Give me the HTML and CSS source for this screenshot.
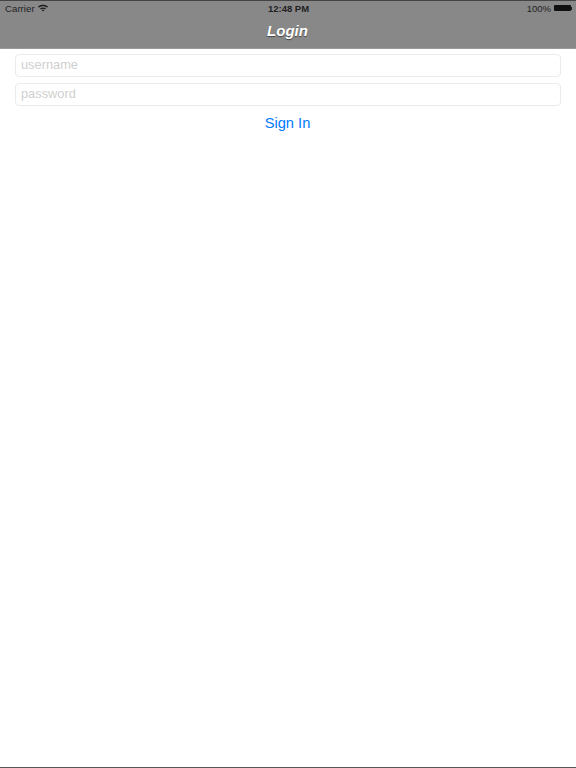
FILE: index.html
```html
<!DOCTYPE html>
<html lang="en">
<head>
    <meta charset="UTF-8">
    <meta name="viewport" content="width=device-width, initial-scale=1.0">
    <title>Login</title>
    <link rel="stylesheet" href="styles.css">
</head>
<body>
    <header class="top-bar">
        <div class="status-bar">
            <div class="status-left">
                <span>Carrier</span>
                <svg class="wifi-icon" width="10" height="8" viewBox="0 0 10 8">
                    <path d="M0 2.6C2.8 0 7.2 0 10 2.6L9 3.7C6.7 1.7 3.3 1.7 1 3.7Z" fill="#1c1c1c"/>
                    <path d="M2 4.5C3.7 3 6.3 3 8 4.5L7 5.5C5.8 4.5 4.2 4.5 3 5.5Z" fill="#1c1c1c"/>
                    <path d="M3.8 6.2C4.5 5.7 5.5 5.7 6.2 6.2L5 7.6Z" fill="#1c1c1c"/>
                </svg>
            </div>
            <div class="status-time">12:48 PM</div>
            <div class="status-right">
                <span>100%</span>
                <div class="battery"></div>
                <div class="battery-tip"></div>
            </div>
        </div>
        <div class="nav-title">Login</div>
    </header>

    <form class="login-form">
        <input type="text" class="text-input" placeholder="username">
        <input type="password" class="text-input" placeholder="password">
        <button type="button" class="sign-in">Sign In</button>
    </form>
</body>
</html>
```

FILE: styles.css
```css
* {
    margin: 0;
    padding: 0;
    box-sizing: border-box;
}

html, body {
    height: 100%;
}

body {
    font-family: "Liberation Sans", Arial, sans-serif;
    background: #fff;
    display: flex;
    flex-direction: column;
    border-bottom: 1px solid #555;
}

/* top bar */
.top-bar {
    height: 49px;
    background: #888;
    border-top: 1px solid #444;
    border-bottom: 1px solid #999;
}

.status-bar {
    height: 14px;
    padding: 0 4px 0 5px;
    display: grid;
    grid-template-columns: 1fr auto 1fr;
    align-items: center;
    font-size: 9.5px;
    color: #222;
}

.status-left {
    display: flex;
    align-items: center;
    gap: 3px;
    font-size: 9.7px;
}

.status-time {
    font-weight: bold;
    font-size: 9.5px;
}

.status-right {
    display: flex;
    justify-content: flex-end;
    align-items: center;
}

.status-right span {
    margin-right: 1px;
}

.battery {
    width: 17px;
    height: 6px;
    margin-left: 2px;
    background: #111;
    border-radius: 1px;
}

.battery-tip {
    width: 1px;
    height: 3px;
    background: #222;
}

.nav-title {
    height: 32px;
    padding-right: 1px;
    line-height: 32px;
    text-align: center;
    font-size: 15px;
    font-weight: bold;
    font-style: italic;
    color: #fff;
    text-shadow: 0 1px 1px rgba(0, 0, 0, 0.5);
}

/* login form */
.login-form {
    padding: 5px 15px 0;
    display: flex;
    flex-direction: column;
    gap: 6px;
}

.text-input {
    width: 100%;
    height: 23px;
    padding: 0 5px 2px;
    border: 1px solid #ebebeb;
    border-radius: 4px;
    font-family: inherit;
    font-size: 12.8px;
    background: #fff;
    outline: none;
}

.text-input::placeholder {
    color: #cfcfcf;
    opacity: 1;
}

.sign-in {
    align-self: center;
    margin-right: 1px;
    border: none;
    background: none;
    font-family: inherit;
    font-size: 14.7px;
    line-height: 22px;
    color: #007aff;
    cursor: pointer;
}
```
